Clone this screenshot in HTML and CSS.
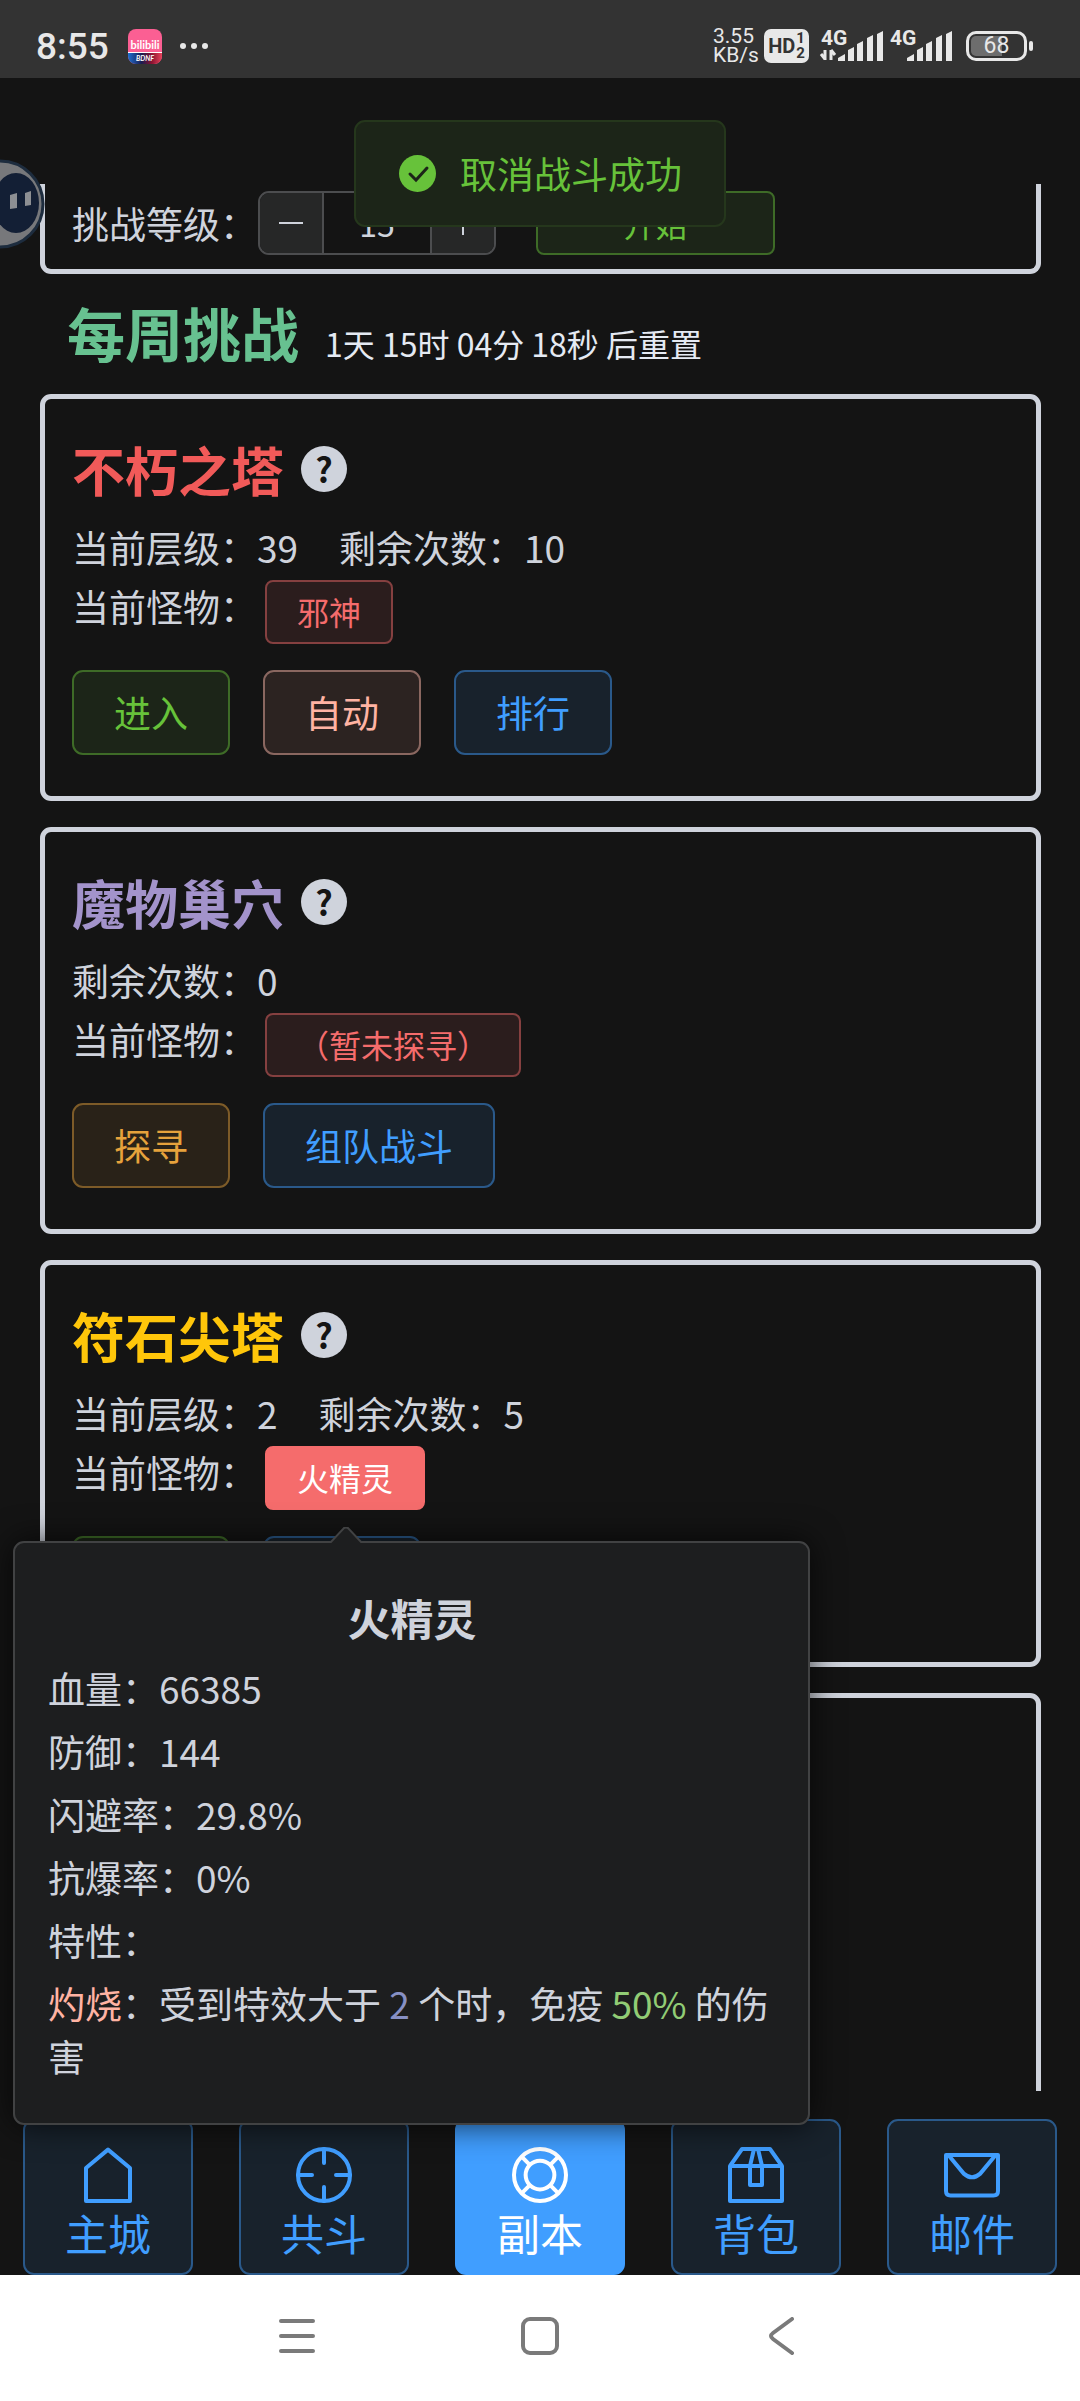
FILE: index.html
```html
<!DOCTYPE html>
<html lang="zh-CN">
<head>
<meta charset="utf-8">
<meta name="viewport" content="width=device-width">
<title>副本</title>
<link rel="stylesheet" href="styles.css">
</head>
<body>
<div class="screen">
  <header class="status">
    <div class="status-side">
      <span class="clock">8:55</span>
      <svg class="app-badge" viewBox="0 0 34 35" aria-hidden="true">
        <defs>
          <clipPath id="badge-clip"><rect width="34" height="35" rx="8"/></clipPath>
          <linearGradient id="badge-strip"><stop offset="0" stop-color="#1f6fd0"/><stop offset=".4" stop-color="#1a1c50"/><stop offset=".7" stop-color="#8a1230"/><stop offset="1" stop-color="#e8435c"/></linearGradient>
        </defs>
        <g clip-path="url(#badge-clip)">
          <rect width="34" height="35" fill="#fb5f93"/>
          <rect y="24" width="34" height="11" fill="url(#badge-strip)"/>
          <rect y="23" width="34" height="1" fill="#fff"/>
          <text x="17" y="20" class="badge-name">bilibili</text>
          <text x="17" y="32" class="badge-sub">BDNF</text>
        </g>
      </svg>
      <svg class="more" viewBox="0 0 28 8" aria-hidden="true"><circle cx="3" cy="4" r="3"/><circle cx="14" cy="4" r="3"/><circle cx="25" cy="4" r="3"/></svg>
    </div>
    <div class="status-side status-right">
      <span class="speed">3.55<br>KB/s</span>
      <span class="hd">HD<span class="hd-sims">1<br>2</span></span>
      <svg class="signal" viewBox="0 0 64 34" aria-hidden="true">
        <text x="0" y="16" class="net">4G</text>
        <path d="M4 21v10M0 25l4 5M10 31V21M10 21l4 5" class="arrows"/>
        <path d="M17 32v-3l7-4v7zM27 32V21l6-3v14zM36 32V15l6-3v20zM46 32V9l6-3v26zM56 32V5l6-3v30z" class="bars"/>
      </svg>
      <svg class="signal" viewBox="0 0 64 34" aria-hidden="true">
        <text x="0" y="16" class="net">4G</text>
        <path d="M17 32v-3l7-4v7zM27 32V21l6-3v14zM36 32V15l6-3v20zM46 32V9l6-3v26zM56 32V5l6-3v30z" class="bars"/>
      </svg>
      <span class="battery"><span>68</span></span>
    </div>
  </header>

  <main class="scroller">
    <section class="card card-cut">
      <label for="level">挑战等级：</label>
      <div class="stepper">
        <button type="button" aria-label="减少"><svg viewBox="0 0 24 24"><path d="M0 12h24"/></svg></button>
        <input id="level" type="text" value="15">
        <button type="button" aria-label="增加"><svg viewBox="0 0 24 24"><path d="M0 12h24M12 0v24"/></svg></button>
      </div>
      <button type="button" class="btn start green">开始</button>
    </section>

    <div class="week">
      <h1>每周挑战</h1>
      <span>1天 15时 04分 18秒 后重置</span>
    </div>

    <section class="card">
      <h2 class="title red-title">不朽之塔<button type="button" class="help">?</button></h2>
      <p class="line"><span>当前层级：39</span><span>剩余次数：10</span></p>
      <div class="monster"><span>当前怪物：</span><button type="button" class="btn tag red">邪神</button></div>
      <div class="actions">
        <button type="button" class="btn green">进入</button>
        <button type="button" class="btn salmon">自动</button>
        <button type="button" class="btn blue">排行</button>
      </div>
    </section>

    <section class="card">
      <h2 class="title purple-title">魔物巢穴<button type="button" class="help">?</button></h2>
      <p class="line"><span>剩余次数：0</span></p>
      <div class="monster"><span>当前怪物：</span><button type="button" class="btn tag red">（暂未探寻）</button></div>
      <div class="actions">
        <button type="button" class="btn orange">探寻</button>
        <button type="button" class="btn blue">组队战斗</button>
      </div>
    </section>

    <section class="card">
      <h2 class="title gold-title">符石尖塔<button type="button" class="help">?</button></h2>
      <p class="line"><span>当前层级：2</span><span>剩余次数：5</span></p>
      <div class="monster"><span>当前怪物：</span><button type="button" class="btn tag red-on">火精灵</button></div>
      <div class="actions">
        <button type="button" class="btn green">进入</button>
        <button type="button" class="btn blue">排行</button>
      </div>
    </section>

    <section class="card card-last"></section>
  </main>

  <nav class="tabs">
    <button type="button" class="tab"><svg viewBox="0 0 1024 1024"><path d="M160 399 512 106l352 293v529H160z"/></svg>主城</button>
    <button type="button" class="tab"><svg viewBox="0 0 1024 1024"><circle cx="512" cy="512" r="416"/><path d="M512 96v224M512 704v224M96 512h224M704 512h224" stroke-linecap="round"/></svg>共斗</button>
    <button type="button" class="tab tab-on"><svg viewBox="0 0 1024 1024"><circle cx="512" cy="512" r="416"/><circle cx="512" cy="512" r="230"/><path d="M218 218l131 131M806 218 675 349M218 806l131-131M806 806 675 675"/></svg>副本</button>
    <button type="button" class="tab"><svg viewBox="0 0 1024 1024"><path d="M96 368h832v560H96zM96 368 288 96h448l192 272M480 96l-64 272v304h192V368L544 96"/></svg>背包</button>
    <button type="button" class="tab"><svg viewBox="0 0 1024 1024"><path d="M96 192h832v576q0 72-72 72H168q-72 0-72-72zM140 200l240 290q132 116 264 0l240-290"/></svg>邮件</button>
  </nav>

  <footer class="system">
    <svg viewBox="0 0 38 38"><path d="M3 4h32M3 19h32M3 34h32"/></svg>
    <svg viewBox="0 0 38 38"><rect x="2" y="2" width="34" height="34" rx="7"/></svg>
    <svg viewBox="0 0 38 38"><path d="M28 2 9 16q-4 3 0 6l19 14"/></svg>
  </footer>

  <aside class="popover">
    <svg class="arrow" viewBox="0 0 32 16" aria-hidden="true"><path d="M0 16 14 1q2-1 4 0l14 15"/></svg>
    <h3>火精灵</h3>
    <p>血量：66385</p>
    <p>防御：144</p>
    <p>闪避率：29.8%</p>
    <p>抗爆率：0%</p>
    <p>特性：</p>
    <p><span class="burn">灼烧</span>：受到特效大于 <span class="count">2</span> 个时，免疫 <span class="rate">50%</span> 的伤害</p>
  </aside>

  <div class="toast" role="status">
    <svg viewBox="0 0 37 37" aria-hidden="true"><circle cx="18.5" cy="18.5" r="18.5" fill="#67c23a"/><path d="M11 19l6 6 11-12" fill="none" stroke="#1c2518" stroke-width="3" stroke-linecap="round"/></svg>
    取消战斗成功
  </div>

  <svg class="ball" viewBox="0 0 46 92" aria-hidden="true">
    <circle cx="0" cy="46" r="43" fill="#77787b" stroke="#1d2c3e" stroke-width="3"/>
    <ellipse cx="16" cy="45" rx="23" ry="30" fill="#131f35"/>
    <path d="M10 37l7-2v15l-7 1zM25 35l6-2v14l-6 1z" fill="#8d8f93"/>
  </svg>
</div>
</body>
</html>
```
FILE: styles.css
```css
* { box-sizing: border-box; }

body {
  margin: 0;
  background: #141414;
  color: #cfd3dc;
  font: 37px/53px "Noto Sans CJK SC", sans-serif;
}

h1, h2, h3, p { margin: 0; }

button, input { font: inherit; color: inherit; margin: 0; padding: 0; }

.screen {
  position: relative;
  display: flex;
  flex-direction: column;
  height: 100vh;
  overflow: hidden;
}

/* system status bar */
.status {
  display: flex;
  justify-content: space-between;
  height: 78px;
  padding: 14px 53px 0 36px;
  background: #333;
  color: #e8e8e8;
  font-family: Roboto, "Noto Sans", sans-serif;
}
.status-side { display: flex; align-items: center; height: 64px; }
.clock { width: 92px; font-size: 37px; font-weight: 500; }
.app-badge { width: 34px; height: 35px; margin-right: 18px; }
.badge-name { fill: #fff; font: 700 11px Lato, sans-serif; text-anchor: middle; }
.badge-sub { fill: #fff; font: italic 700 7px Lato, sans-serif; text-anchor: middle; }
.more { width: 28px; height: 8px; fill: #e8e8e8; }
.status-right { gap: 5px; }
.speed { width: 46px; font-size: 21px; line-height: 19px; }
.hd {
  display: flex;
  align-items: center;
  justify-content: center;
  gap: 1px;
  width: 45px;
  height: 34px;
  margin-right: 7px;
  border-radius: 7px;
  background: #e8e8e8;
  color: #333;
  font-size: 20px;
  font-weight: 700;
}
.hd-sims { font-size: 15px; line-height: 15px; }
.signal { width: 64px; height: 34px; overflow: visible; }
.net { fill: #e8e8e8; font: 700 21px Roboto, sans-serif; }
.bars { fill: #e8e8e8; }
.arrows { fill: none; stroke: #e8e8e8; stroke-width: 3; }
.battery {
  position: relative;
  width: 61px;
  height: 30px;
  margin-left: 7px;
  padding: 2px;
  border: 3px solid #e8e8e8;
  border-radius: 10px;
  background: linear-gradient(90deg, #6d6d6d 60%, transparent 60%) content-box;
  font-size: 23px;
  line-height: 20px;
  text-align: center;
}
.battery::after {
  content: "";
  position: absolute;
  top: 7px;
  right: -9px;
  width: 4px;
  height: 10px;
  border-radius: 2px;
  background: #e8e8e8;
}

/* scrolling list */
.scroller { flex: 1; min-height: 0; margin: 106px 39px 28px 40px; overflow: hidden; }
.card {
  margin-bottom: 26px;
  padding: 41px 27px;
  border: 5px solid #cfd3dc;
  border-radius: 11px;
}
.card-cut {
  display: flex;
  align-items: center;
  margin: 0;
  padding: 7px 27px 14px;
  border-top: 0;
  border-radius: 0 0 11px 11px;
}
.card-cut label { width: 186px; }
.card-last { min-height: 480px; }

.stepper {
  display: flex;
  width: 238px;
  height: 64px;
  margin-right: 40px;
  overflow: hidden;
  border: 2px solid #4c4d4f;
  border-radius: 11px;
}
.stepper button {
  display: flex;
  align-items: center;
  justify-content: center;
  width: 62px;
  border: 0;
  background: #262727;
}
.stepper svg { width: 24px; height: 24px; fill: none; stroke: #cfd3dc; stroke-width: 2; }
.stepper input {
  flex: 1;
  min-width: 0;
  border: solid #4c4d4f;
  border-width: 0 2px;
  background: transparent;
  font-size: 32px;
  text-align: center;
}

.week { display: flex; align-items: baseline; gap: 26px; height: 120px; padding: 0 27px; color: #e5eaf3; font-size: 32px; }
.week h1 { color: #67c190; font-size: 58px; line-height: 116px; }

.title { display: flex; align-items: center; gap: 17px; margin-bottom: 23px; font-size: 53px; line-height: 58px; }
.help {
  width: 46px;
  height: 46px;
  border: 0;
  border-radius: 50%;
  background: #cfd3dc;
  color: #141414;
  font-size: 34px;
  font-weight: 700;
  line-height: 46px;
}
.red-title { color: #f15a59; }
.purple-title { color: #a393cb; }
.gold-title { color: #ffc60a; }

.line { display: flex; gap: 41px; margin-bottom: 6px; }
.monster { display: flex; align-items: flex-start; margin-bottom: 26px; }
.monster span { width: 193px; }
.actions { display: flex; gap: 33px; }

.btn {
  height: 85px;
  padding: 0 40px;
  border: 2px solid;
  border-radius: 11px;
  white-space: nowrap;
}
.tag { height: 64px; padding: 0 30px 2px; border-radius: 8px; font-size: 32px; line-height: 48px; }
.start { width: 239px; height: 64px; border-radius: 8px; font-size: 32px; line-height: 48px; }
.green { background: #1c2518; border-color: #3e6b27; color: #67c23a; }
.red { background: #2b1d1d; border-color: #854040; color: #f56c6c; }
.red-on { background: #f56c6c; border-color: #f56c6c; color: #fff; }
.salmon { background: #2c2321; border-color: #8a6760; color: #ffb3a3; }
.blue { background: #18222c; border-color: #2a598a; color: #409eff; }
.orange { background: #292218; border-color: #7d5b28; color: #e6a23c; }

/* bottom tabs */
.tabs { display: grid; grid-template-columns: repeat(5, 1fr); }
.tab {
  display: flex;
  flex-direction: column;
  align-items: center;
  height: 156px;
  margin: 0 23px;
  padding: 22px 0 0;
  border: 2px solid #2a598a;
  border-radius: 11px;
  background: #18222c;
  color: #409eff;
  font-size: 43px;
  line-height: 51px;
}
.tab svg { width: 64px; height: 64px; fill: none; stroke: currentColor; stroke-width: 64; stroke-linejoin: round; }
.tab-on { background: #409eff; border-color: #409eff; color: #fff; }

.system { display: flex; justify-content: center; align-items: center; gap: 205px; height: 126px; padding-bottom: 5px; background: #fff; }
.system svg { width: 38px; height: 38px; fill: none; stroke: #7a7a7a; stroke-width: 4; stroke-linecap: round; }

/* overlays */
.popover {
  position: absolute;
  top: 1541px;
  left: 13px;
  width: 797px;
  padding: 46px 32px 30px 33px;
  border: 2px solid #414243;
  border-radius: 11px;
  background: #1d1e1f;
  box-shadow: 0 0 32px rgba(0, 0, 0, .72);
}
.popover h3 { margin-bottom: 17px; font-size: 43px; line-height: 56px; text-align: center; }
.popover p { margin-bottom: 10px; }
.arrow { position: absolute; top: -16px; left: 315px; width: 32px; height: 16px; fill: #1d1e1f; stroke: #414243; stroke-width: 2; }
.burn { color: #ffb3a3; }
.count { color: #8790c4; }
.rate { color: #91cc75; }

.toast {
  position: absolute;
  top: 120px;
  left: 50%;
  display: flex;
  align-items: center;
  gap: 24px;
  height: 107px;
  padding: 0 42px 0 43px;
  transform: translateX(-50%);
  border: 2px solid #25371c;
  border-radius: 11px;
  background: #1c2518;
  color: #67c23a;
  white-space: nowrap;
}
.toast svg { width: 37px; height: 37px; }

.ball { position: absolute; top: 158px; left: 0; width: 46px; height: 92px; }
```
